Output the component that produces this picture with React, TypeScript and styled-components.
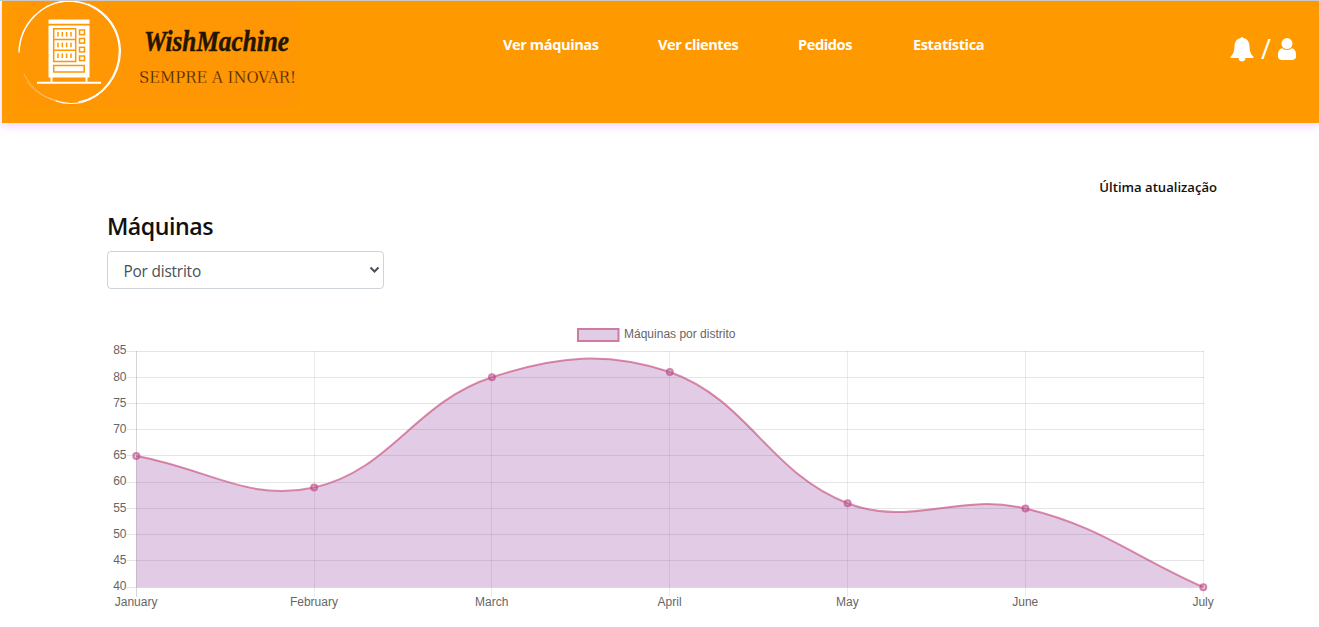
import React from 'react';
import styled, { createGlobalStyle } from 'styled-components';

const GlobalStyle = createGlobalStyle`
  * { box-sizing: border-box; }
  html, body { margin: 0; background: #fff; overflow: hidden; }
  body { font-family: 'Open Sans', 'Noto Sans', sans-serif; color: #111; }
`;

const Page = styled.div`
  width: 1319px;
  height: 627px;
  border-top: 1px solid #c9c9c9;
  padding-left: 2px;
  overflow: hidden;
`;

const Header = styled.header`
  height: 122px;
  background: #ff9900;
  box-shadow: 0 2px 10px rgba(226, 130, 255, 0.45);
  display: flex;
  align-items: flex-start;
`;

const LogoLink = styled.a`
  flex: 0 0 281px;
  height: 106px;
  margin-left: 15px;
  background: #ff9603;
  svg { display: block; overflow: visible; }
`;

const Nav = styled.nav`
  display: flex;
  margin-left: 205px;
  padding-top: 32px;
  flex: 1;
`;

const NavLink = styled.a<{ $w: number; $gap: number }>`
  width: ${(p) => p.$w}px;
  margin-right: ${(p) => p.$gap}px;
  color: #fff;
  font-weight: 700;
  font-size: 14.6px;
  line-height: 22px;
  letter-spacing: -0.42px;
  white-space: nowrap;
`;

const Actions = styled.div`
  display: flex;
  padding: 35px 23px 0 0;
  color: #fff;
`;

const Slash = styled.span`
  width: 24px;
  text-align: center;
  font-size: 27px;
  line-height: 26px;
`;

const Main = styled.main`
  margin: 0 102px 0 105px;
  padding-top: 53px;
`;

const Updated = styled.div`
  text-align: right;
  font-size: 13.1px;
  font-weight: 600;
  line-height: 22px;
`;

const Title = styled.h4`
  margin: 14px 0 10px;
  font-size: 23.2px;
  font-weight: 600;
  line-height: 29px;
  letter-spacing: -0.5px;
`;

const SelectBox = styled.div`
  display: grid;
  width: 277px;
  height: 38px;
  align-items: center;
  svg { grid-area: 1 / 1; justify-self: end; margin-right: 4px; pointer-events: none; }
`;

const Select = styled.select`
  grid-area: 1 / 1;
  width: 100%;
  height: 38px;
  appearance: none;
  border: 1px solid #ced4da;
  border-radius: 4px;
  background: #fff;
  color: #495057;
  padding: 3px 15.5px 0;
  font: 400 15.4px 'Open Sans', sans-serif;
  letter-spacing: -0.2px;
`;

const ChartArea = styled.div`
  margin-top: 31px;
  svg { display: block; }
`;

const months = ['January', 'February', 'March', 'April', 'May', 'June', 'July'];
const values = [65, 59, 80, 81, 56, 55, 40];
const ticks = [85, 80, 75, 70, 65, 60, 55, 50, 45, 40];
const tickBaselines = [34, 61, 87, 113, 139, 165, 192, 218, 244, 270];
const area = { left: 29.3, right: 1096.3, top: 31, bottom: 267.2 };
const xAt = (i: number) => area.left + ((area.right - area.left) * i) / 6;
const yAt = (v: number) => area.top + ((85 - v) / 45) * (area.bottom - area.top);
const snap = (n: number) => Math.floor(n) + 0.5;

const points = values.map((v, i) => ({ x: xAt(i), y: yAt(v) }));
const clampY = (y: number) => Math.min(area.bottom, Math.max(area.top, y));

// Smooths each point with handles proportional to the neighbouring distances.
const handles = points.map((p, i) => {
  const prev = points[i - 1] ?? p;
  const next = points[i + 1] ?? p;
  const a = Math.hypot(p.x - prev.x, p.y - prev.y);
  const b = Math.hypot(next.x - p.x, next.y - p.y);
  const fa = (0.4 * a) / (a + b);
  const fb = (0.4 * b) / (a + b);
  const dx = next.x - prev.x;
  const dy = next.y - prev.y;
  return {
    before: [p.x - fa * dx, clampY(p.y - fa * dy)],
    after: [p.x + fb * dx, clampY(p.y + fb * dy)],
  };
});

const line = points
  .map((p, i) =>
    i === 0 ? `M${p.x} ${p.y}` : `C${handles[i - 1].after} ${handles[i].before} ${p.x} ${p.y}`,
  )
  .join(' ');

const Label = styled.text`
  font: 12px 'Liberation Sans', Arial, sans-serif;
  fill: #666;
`;

function Chart() {
  return (
    <svg width="1112" height="300" viewBox="0 0 1112 300">
      <rect x="471" y="9" width="40.5" height="12" fill="#e0cce4" stroke="#cf7ba0" strokeWidth="2" />
      <Label x="517" y="18" textLength="111.5">Máquinas por distrito</Label>
      {ticks.map((t, i) => (
        <g key={t}>
          <line x1="20" x2="1097" y1={snap(yAt(t))} y2={snap(yAt(t))} stroke="rgba(0,0,0,.1)" />
          <Label x="19.5" y={tickBaselines[i]} textAnchor="end">{t}</Label>
        </g>
      ))}
      {months.map((m, i) => (
        <g key={m}>
          <line x1={snap(xAt(i))} x2={snap(xAt(i))} y1="31" y2="277" stroke={i === 0 ? 'rgba(0,0,0,.16)' : 'rgba(0,0,0,.08)'} />
          <Label x={xAt(i) - 0.2} y="286" textAnchor="middle">{m}</Label>
        </g>
      ))}
      <path d={`${line} L${area.right} ${area.bottom} L${area.left} ${area.bottom}Z`} fill="rgba(146,66,160,.27)" />
      <path d={line} fill="none" stroke="rgba(199,80,126,.66)" strokeWidth="2" />
      {points.map((p) => (
        <circle key={p.x} cx={p.x} cy={p.y} r="3" fill="rgba(146,66,160,.27)" stroke="rgba(195,75,130,.66)" strokeWidth="2" />
      ))}
    </svg>
  );
}

function Logo() {
  return (
    <svg width="281" height="106" viewBox="17 1 281 106">
      <g fill="none" stroke="#fff" strokeLinecap="round">
        <path d="M19 52C20 24 42 2 68 1C96 1 119 23 119.500 51C119 75 103 98 79 102" strokeWidth="1.500" />
        <path d="M88 4C108 12 120 30 120.500 51C120 77 103 96 82 102.500C73 104 64 104 56 101" strokeWidth="1.200" />
        <path d="M24 74C31 88 42 97 58 101" strokeWidth=".7" opacity=".5" />
        <path d="M27 82C36 94 49 101 67 102.500" strokeWidth=".5" opacity=".5" />
      </g>
      <g fill="#fff">
        <path d="M48.500 19.500h41v4.300h-41z M48.500 25.500h41v52h-41z M50.500 77h2v5h-2z M85.500 77h2v5h-2z M37 81.700h64v2H37z" />
      </g>
      <g fill="none" stroke="#ff9603" strokeWidth="1.500">
        <path d="M53.700 28.700h22v32.800h-22z M53.700 39.500h22 M53.700 50.300h22 M53.700 65.500h30.500v6.500H53.700z" />
        {[30, 38.500, 47.300, 56].map((y) => <rect key={y} x="79.500" y={y} width="5" height="4.600" />)}
        {[32, 42.800, 53.500].map((y) => (
          <path key={y} d={`M58 ${y}v4.500 M62.300 ${y}v4.500 M66.600 ${y}v4.500 M71 ${y}v4.500`} />
        ))}
      </g>
      <text x="144" y="51" textLength="145" lengthAdjust="spacingAndGlyphs" fill="#241500" stroke="#241500" strokeWidth=".5" fontFamily="'Liberation Serif', serif" fontStyle="italic" fontWeight="700" fontSize="30">WishMachine</text>
      <text x="139" y="82.500" textLength="157" lengthAdjust="spacingAndGlyphs" fill="#3a2200" stroke="#ff9603" strokeWidth=".3" fontFamily="'DejaVu Serif', serif" fontSize="17">SEMPRE A INOVAR!</text>
    </svg>
  );
}

export default function App() {
  return (
    <Page>
      <GlobalStyle />
      <Header>
        <LogoLink><Logo /></LogoLink>
        <Nav>
          <NavLink $w={97} $gap={58}>Ver máquinas</NavLink>
          <NavLink $w={82} $gap={58}>Ver clientes</NavLink>
          <NavLink $w={57} $gap={58}>Pedidos</NavLink>
          <NavLink $w={72} $gap={0}>Estatística</NavLink>
        </Nav>
        <Actions>
          <svg width="24" height="27" viewBox="0 0 24 27" fill="currentColor">
            <path d="M10.700 2a1.400 1.400 0 0 1 2.600 0C17.500 2.800 19.300 6 19.500 10C19.700 15 20.500 18 23.700 21q0 .9-.9 .9H15.400a3.400 3.400 0 0 1-6.800 0H1.200q-.9 0-.9-.9C3.500 18 4.300 15 4.500 10C4.700 6 6.500 2.800 10.700 2z" />
          </svg>
          <Slash>/</Slash>
          <svg width="18" height="27" viewBox="0 0 18 27" fill="currentColor">
            <circle cx="9" cy="7.600" r="5.500" />
            <path d="M4.200 12.200a7 7 0 0 0 9.600 0C17 12.700 18.200 16 18.200 20q0 4-3.800 4H3.600Q-.2 24 -.2 20C-.2 16 1 12.700 4.200 12.200z" />
          </svg>
        </Actions>
      </Header>
      <Main>
        <Updated>Última atualização</Updated>
        <Title>Máquinas</Title>
        <SelectBox>
          <Select><option>Por distrito</option></Select>
          <svg width="11" height="8" viewBox="0 0 11 8"><path d="M1.500 1.500l4 4 4-4" fill="none" stroke="#495057" strokeWidth="2" /></svg>
        </SelectBox>
        <ChartArea><Chart /></ChartArea>
      </Main>
    </Page>
  );
}
